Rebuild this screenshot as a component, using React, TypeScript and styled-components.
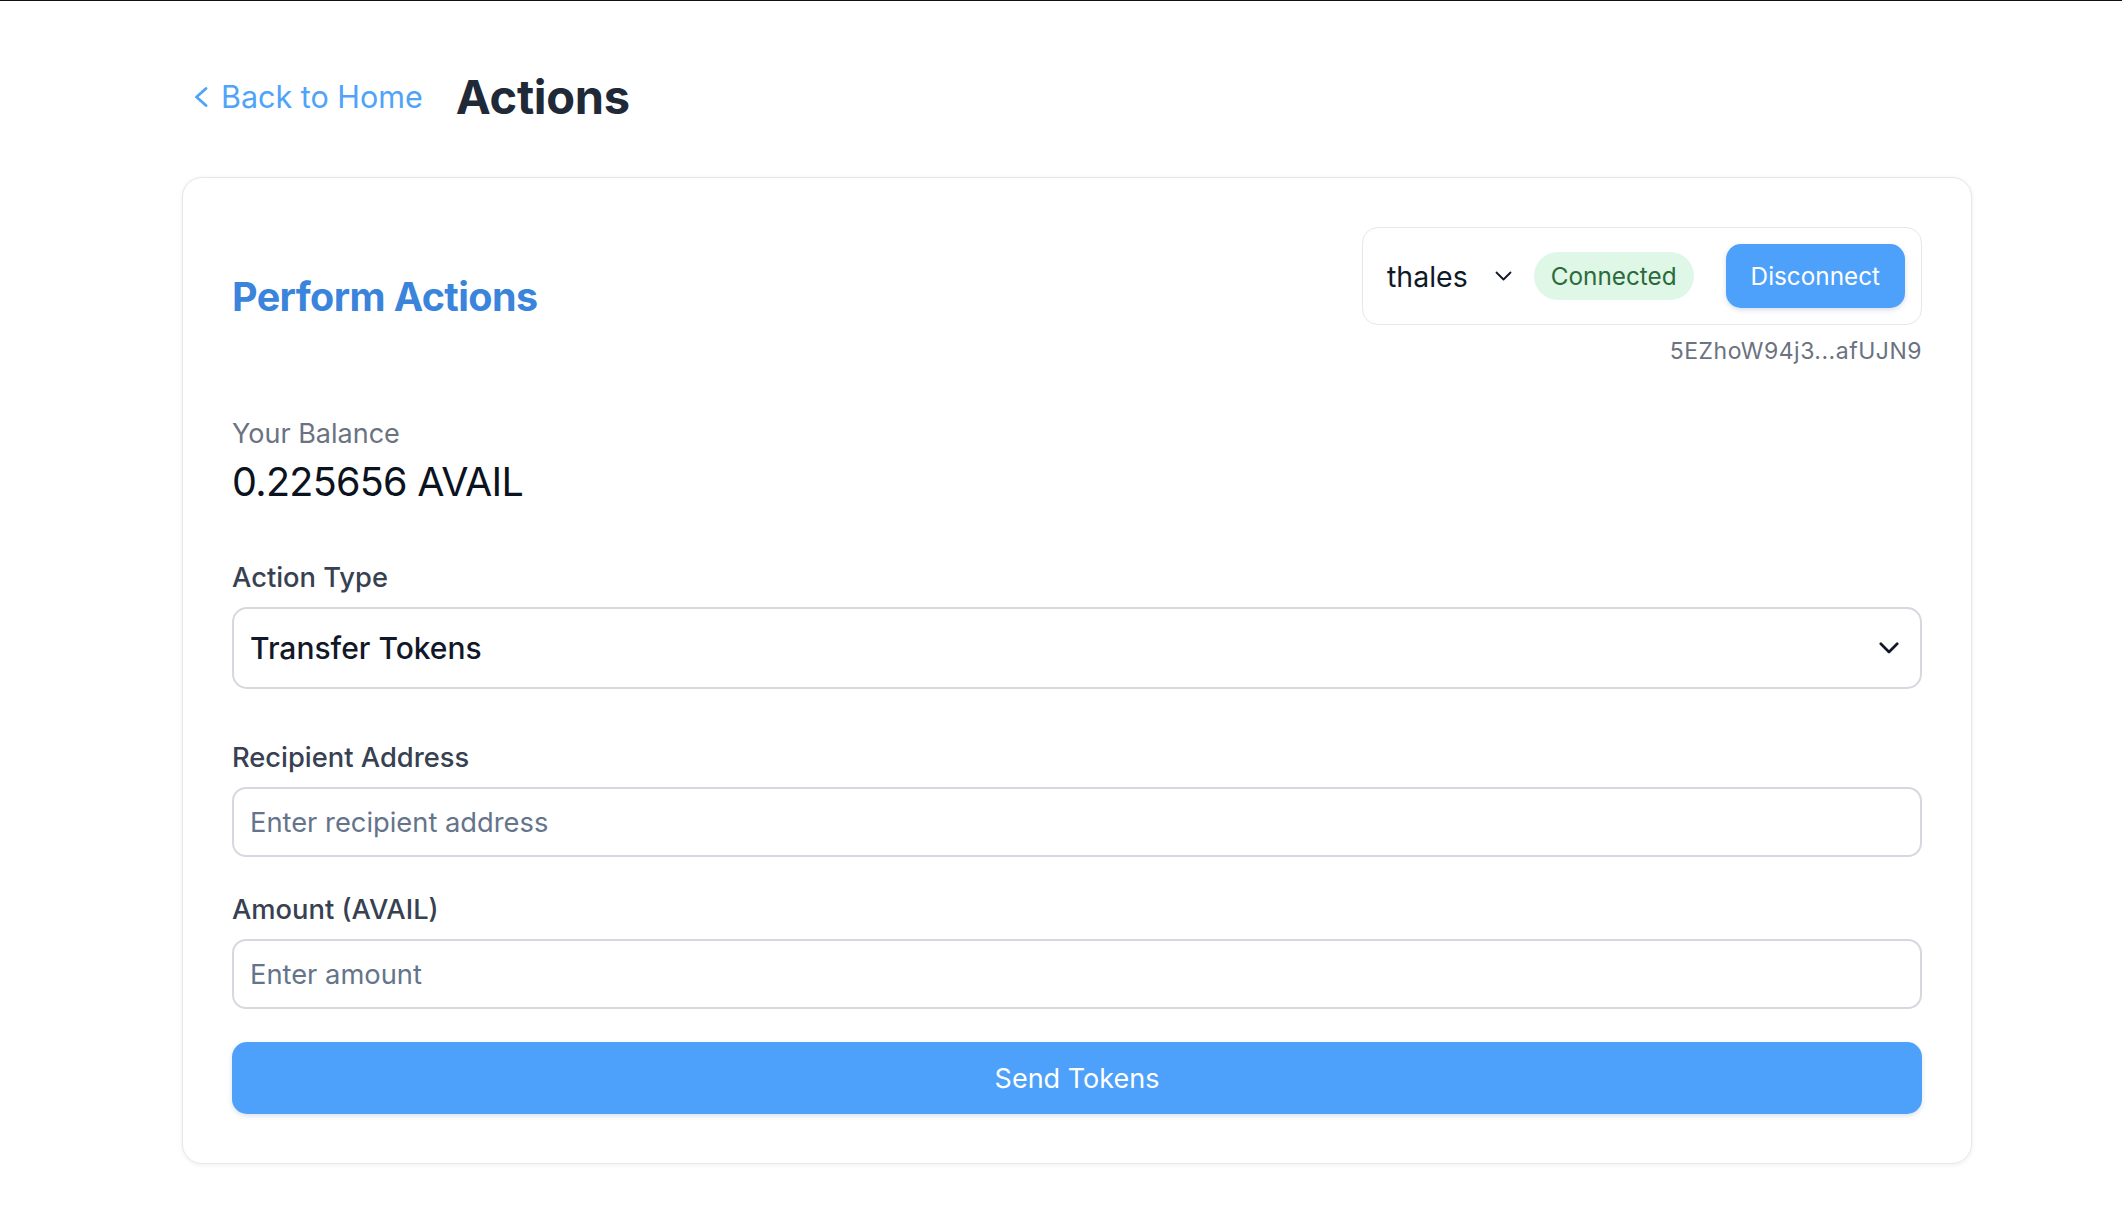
import React from "react";
import styled, { createGlobalStyle } from "styled-components";

const GlobalStyle = createGlobalStyle`
  * { box-sizing: border-box; }
  html, body { margin: 0; padding: 0; background: #ffffff; }
  body {
    font-family: Inter, "Noto Sans", "Liberation Sans", sans-serif;
    border-top: 1px solid #111111;
    -webkit-font-smoothing: antialiased;
  }
`;

const Page = styled.main`
  padding: 0 150px 60px 182px;
`;

const Header = styled.header`
  display: flex;
  align-items: center;
  gap: 33px;
  height: 56px;
  margin-top: 68px;
  margin-bottom: 52px;
  padding-left: 12px;
`;

const BackLink = styled.a`
  display: flex;
  align-items: center;
  gap: 13px;
  color: #4fa3f8;
  font-size: 30.5px;
  line-height: 1;
  text-decoration: none;
  cursor: pointer;
`;

const PageTitle = styled.h1`
  margin: 0;
  font-size: 47px;
  line-height: 56px;
  font-weight: 700;
  color: #1f2937;
  letter-spacing: -0.3px;
`;

const Card = styled.section`
  display: flex;
  flex-direction: column;
  border: 1px solid #e5e7eb;
  border-radius: 20px;
  padding: 49px;
  background: #ffffff;
  box-shadow: 0 1px 5px rgba(15, 23, 42, 0.07);
`;

const CardHeader = styled.div`
  display: flex;
  justify-content: space-between;
  align-items: center;
`;

const PanelTitle = styled.h2`
  margin: 0;
  font-size: 39.5px;
  line-height: 52px;
  font-weight: 700;
  color: #3a84dc;
  letter-spacing: -0.6px;
`;

const WalletColumn = styled.div`
  display: flex;
  flex-direction: column;
  align-items: flex-end;
  gap: 10px;
`;

const WalletBox = styled.div`
  display: flex;
  align-items: center;
  border: 1px solid #e5e7eb;
  border-radius: 16px;
  padding: 16px;
  background: #ffffff;
`;

const AccountSelect = styled.div`
  display: flex;
  align-items: center;
  gap: 27px;
  padding-left: 8px;
  font-size: 28.5px;
  color: #111827;
`;

const StatusPill = styled.span`
  display: flex;
  align-items: center;
  height: 48px;
  margin-left: 22px;
  padding: 0 17px;
  border-radius: 24px;
  background: #dff7e6;
  color: #2b6b3b;
  font-size: 24.3px;
`;

const DisconnectButton = styled.button`
  height: 64px;
  margin-left: 32px;
  padding: 0 25px;
  border: none;
  border-radius: 15px;
  background: #4ea1fa;
  color: #ffffff;
  font-family: inherit;
  font-size: 24.3px;
  box-shadow: 0 2px 5px rgba(30, 64, 120, 0.18);
  cursor: pointer;
`;

const Address = styled.span`
  font-size: 23px;
  line-height: 32px;
  color: #6b7280;
  letter-spacing: 0.5px;
`;

const BalanceBlock = styled.div`
  display: flex;
  flex-direction: column;
  margin-top: 48px;
`;

const BalanceLabel = styled.span`
  font-size: 27px;
  line-height: 38px;
  color: #6b7280;
`;

const BalanceValue = styled.span`
  font-size: 39.5px;
  line-height: 58px;
  color: #0b1220;
  letter-spacing: -0.7px;
`;

const FieldGroup = styled.div<{ $gapTop: number }>`
  display: flex;
  flex-direction: column;
  gap: 9px;
  margin-top: ${(p) => p.$gapTop}px;
`;

const FieldLabel = styled.label`
  font-size: 27.3px;
  line-height: 40px;
  font-weight: 500;
  color: #374151;
`;

const SelectBox = styled.div`
  display: flex;
  align-items: center;
  justify-content: space-between;
  height: 82px;
  padding: 0 21px 0 16px;
  border: 2px solid #d5d8de;
  border-radius: 15px;
  font-size: 30px;
  font-weight: 500;
  color: #111827;
  background: #ffffff;
`;

const TextInput = styled.input`
  height: 70px;
  padding: 0 16px;
  border: 2px solid #d5d8de;
  border-radius: 14px;
  font-family: inherit;
  font-size: 27.3px;
  color: #111827;
  background: #ffffff;
  outline: none;
  &::placeholder {
    color: #64748b;
  }
`;

const SubmitButton = styled.button`
  height: 72px;
  margin-top: 33px;
  border: none;
  border-radius: 15px;
  background: #4ea1fa;
  color: #ffffff;
  font-family: inherit;
  font-size: 27px;
  box-shadow: 0 2px 5px rgba(30, 64, 120, 0.16);
  cursor: pointer;
`;

const BackChevron = () => (
  <svg width="14" height="20" viewBox="0 0 14 20" fill="none">
    <polyline points="12,1.5 2.5,10 12,18.5" stroke="currentColor" strokeWidth="2.8" strokeLinecap="round" strokeLinejoin="round" />
  </svg>
);

const SmallChevron = () => (
  <svg width="17" height="10" viewBox="0 0 17 10" fill="none">
    <polyline points="1.5,1.5 8.5,8.5 15.5,1.5" stroke="#111827" strokeWidth="1.8" strokeLinecap="round" strokeLinejoin="round" />
  </svg>
);

const SelectChevron = () => (
  <svg width="20" height="12" viewBox="0 0 20 12" fill="none">
    <polyline points="1.8,1.8 10,10 18.2,1.8" stroke="#111827" strokeWidth="2.7" strokeLinecap="round" strokeLinejoin="round" />
  </svg>
);

export default function App() {
  return (
    <>
      <GlobalStyle />
      <Page>
        <Header>
          <BackLink>
            <BackChevron />
            Back to Home
          </BackLink>
          <PageTitle>Actions</PageTitle>
        </Header>
        <Card>
          <CardHeader>
            <PanelTitle>Perform Actions</PanelTitle>
            <WalletColumn>
              <WalletBox>
                <AccountSelect>
                  thales
                  <SmallChevron />
                </AccountSelect>
                <StatusPill>Connected</StatusPill>
                <DisconnectButton>Disconnect</DisconnectButton>
              </WalletBox>
              <Address>5EZhoW94j3...afUJN9</Address>
            </WalletColumn>
          </CardHeader>

          <BalanceBlock>
            <BalanceLabel>Your Balance</BalanceLabel>
            <BalanceValue>0.225656 AVAIL</BalanceValue>
          </BalanceBlock>

          <FieldGroup $gapTop={47}>
            <FieldLabel>Action Type</FieldLabel>
            <SelectBox>
              Transfer Tokens
              <SelectChevron />
            </SelectBox>
          </FieldGroup>

          <FieldGroup $gapTop={49}>
            <FieldLabel>Recipient Address</FieldLabel>
            <TextInput placeholder="Enter recipient address" />
          </FieldGroup>

          <FieldGroup $gapTop={33}>
            <FieldLabel>Amount (AVAIL)</FieldLabel>
            <TextInput placeholder="Enter amount" />
          </FieldGroup>

          <SubmitButton>Send Tokens</SubmitButton>
        </Card>
      </Page>
    </>
  );
}
